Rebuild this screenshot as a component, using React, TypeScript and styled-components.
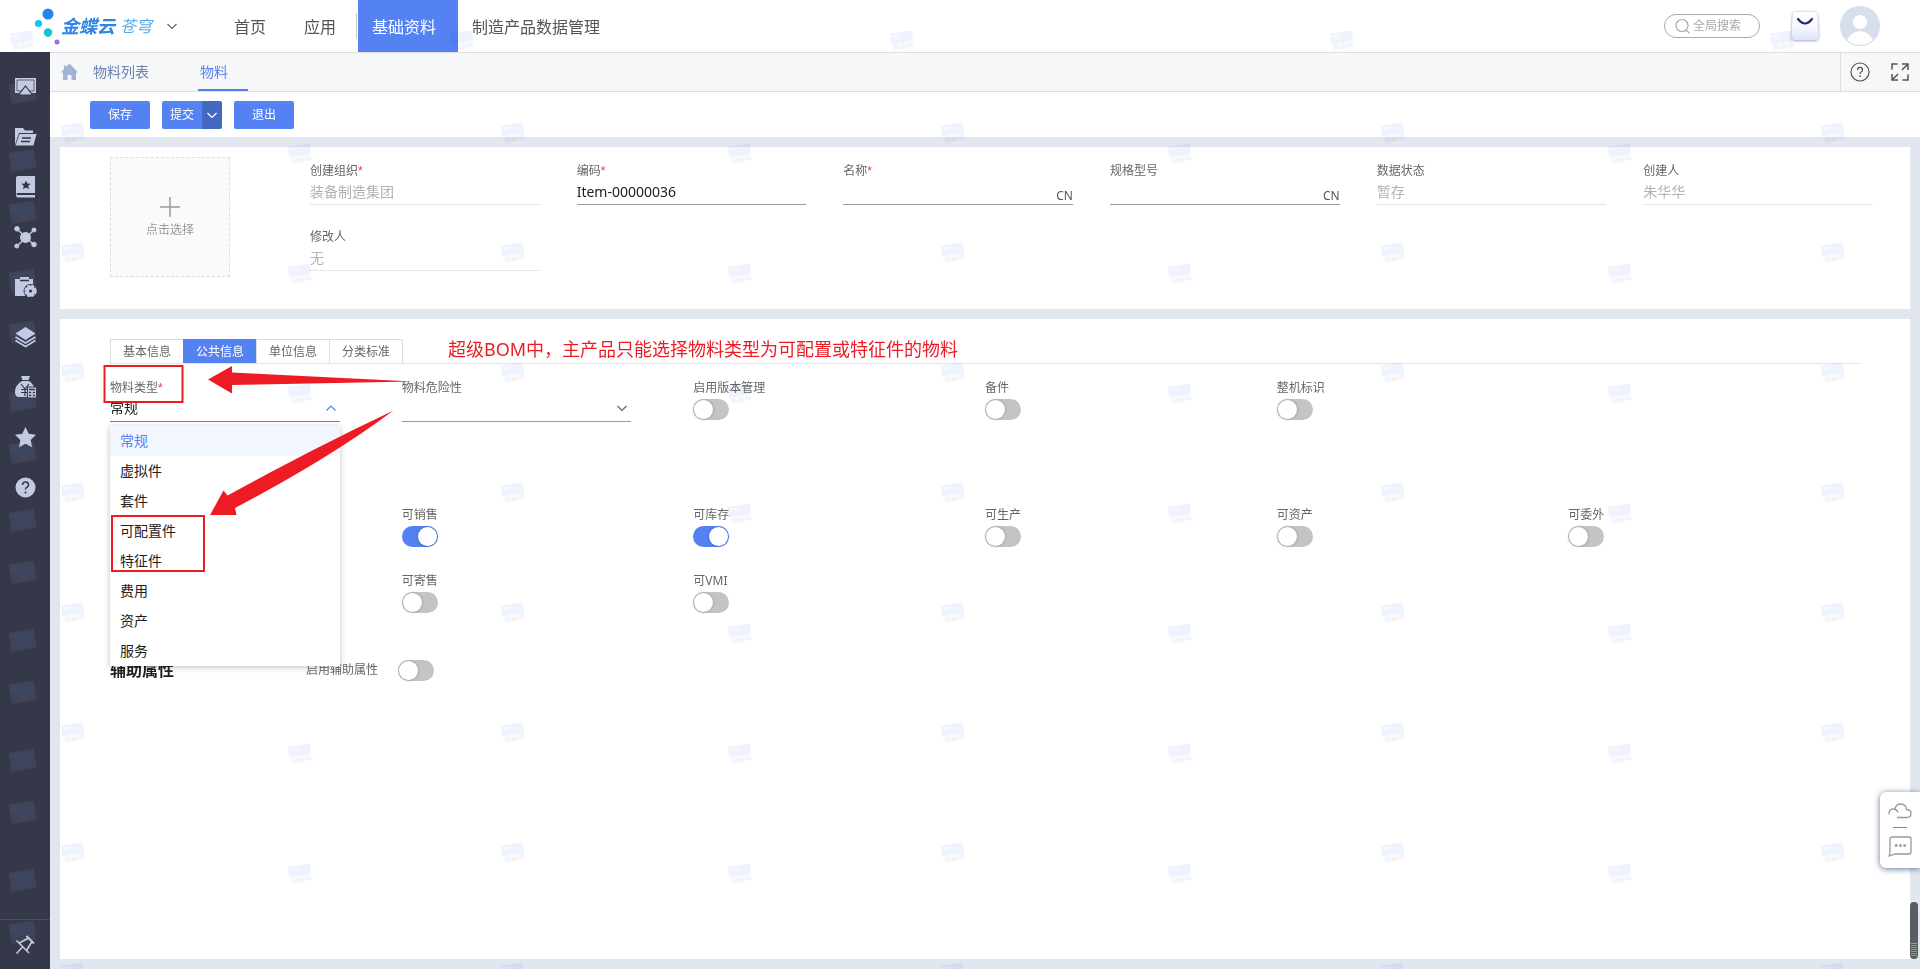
import React from 'react';
import styled, { createGlobalStyle, css } from 'styled-components';

const GlobalStyle = createGlobalStyle`
  * { box-sizing: border-box; }
  html, body, #root { height: 100%; }
  body {
    margin: 0;
    background: #e2e6ef;
    color: #212121;
    font-family: "Noto Sans", "Noto Sans CJK SC", sans-serif;
    font-size: 14px;
    line-height: 20px;
    overflow: hidden;
  }
  button, input, select { font: inherit; color: inherit; margin: 0; padding: 0; border: 0; background: none; outline: 0; }
  button { cursor: pointer; }
  a { color: inherit; text-decoration: none; }
  svg { display: block; }
`;

const Page = styled.div`
  position: relative;
  min-height: 100vh;
  display: flex;
  flex-direction: column;
`;

/* ---------- header ---------- */
const Header = styled.header`
  height: 52px;
  display: flex;
  align-items: center;
  background: #fff;
  flex-shrink: 0;
`;
const Brand = styled.a`
  display: flex;
  align-items: center;
  width: 180px;
  margin-right: 40px;
  padding-left: 34px;
`;
const BrandName = styled.span`
  font-size: 18px;
  line-height: 24px;
  font-weight: 700;
  font-style: italic;
  color: #2b84e8;
  margin-left: 1px;
  white-space: nowrap;
`;
const BrandSub = styled.span`
  font-size: 16px;
  line-height: 24px;
  font-style: italic;
  color: #5aa7f0;
  margin: 0 15px 0 5px;
  white-space: nowrap;
`;
const Nav = styled.nav`
  display: flex;
  align-items: center;
  align-self: stretch;
  flex: 1;
`;
const NavLink = styled.a<{ $active?: boolean }>`
  display: flex;
  align-items: center;
  align-self: stretch;
  padding: 2px 14px 0 14px;
  margin-right: 10px;
  font-size: 16px;
  color: #555;
  ${p => p.$active && css`
    background: #5582f3;
    color: #fff;
    margin-right: 0;
    padding-right: 22px;
  `}
`;
const NavRule = styled.span`
  width: 1px;
  height: 26px;
  margin: 0 1px 0 -4px;
  background: #ccc;
`;
const Search = styled.label`
  display: flex;
  align-items: center;
  gap: 3px;
  width: 96px;
  height: 24px;
  padding: 0 10px;
  border: 1px solid #aaa;
  border-radius: 12px;
  margin-right: 29px;
`;
const SearchInput = styled.input`
  width: 54px;
  font-size: 12px;
  &::placeholder { color: #aaa; opacity: 1; }
`;
const IconButton = styled.button<{ $gap?: number }>`
  display: block;
  margin-right: ${p => p.$gap ?? 0}px;
`;

/* ---------- frame ---------- */
const Body = styled.div`
  flex: 1;
  display: flex;
  min-height: 0;
`;
const Sidebar = styled.aside`
  width: 50px;
  background: #353849;
  display: flex;
  flex-direction: column;
  justify-content: space-between;
  flex-shrink: 0;
`;
const SideList = styled.div`
  position: relative;
  display: flex;
  flex-direction: column;
  padding-top: 10px;
`;
const SideButton = styled.button`
  position: relative;
  height: 50px;
  display: flex;
  align-items: center;
  justify-content: center;
`;
const SideFoot = styled(SideButton)`
  border-top: 1px solid #4b4e60;
`;
const Main = styled.main`
  flex: 1;
  min-width: 0;
  display: flex;
  flex-direction: column;
`;
const TabBar = styled.div`
  height: 40px;
  display: flex;
  align-items: stretch;
  background: #f5f7f9;
  border-top: 1px solid #dedede;
  border-bottom: 1px solid #dedede;
`;
const HomeLink = styled.a`
  display: flex;
  align-items: center;
  padding: 0 14px 0 10px;
`;
const PageTab = styled.a<{ $active?: boolean }>`
  display: flex;
  align-items: center;
  padding-top: 2px;
  width: ${p => (p.$active ? 50 : 105)}px;
  padding-left: ${p => (p.$active ? 2 : 0)}px;
  color: ${p => (p.$active ? '#5582f3' : '#6b82ae')};
  border-bottom: 2px solid ${p => (p.$active ? '#5582f3' : 'transparent')};
`;
const TabTools = styled.div`
  margin-left: auto;
  display: flex;
  align-items: center;
  gap: 20px;
  padding: 0 10px 0 9px;
  border-left: 1px solid #dedede;
`;
const Toolbar = styled.div`
  height: 45px;
  display: flex;
  align-items: center;
  gap: 12px;
  padding-left: 40px;
  background: #fff;
`;
const Action = styled.button`
  width: 60px;
  height: 28px;
  padding-top: 1px;
  border-radius: 2px;
  background: #5582f3;
  color: #fff;
  font-size: 12px;
`;
const Split = styled.div`
  display: flex;
`;
const SplitMain = styled(Action)`
  width: 40px;
  border-radius: 2px 0 0 2px;
`;
const SplitMore = styled(Action)`
  width: 20px;
  border-radius: 0 2px 2px 0;
  background: #4468c2;
  display: flex;
  align-items: center;
  justify-content: center;
`;
const Content = styled.div`
  flex: 1;
  display: flex;
  flex-direction: column;
  gap: 10px;
  padding: 10px;
`;

/* ---------- cards and fields ---------- */
const SummaryCard = styled.section`
  display: flex;
  gap: 80px;
  min-height: 162px;
  padding: 10px 0 0 50px;
  background: #fff;
`;
const Upload = styled.button`
  width: 120px;
  height: 120px;
  flex-shrink: 0;
  display: flex;
  flex-direction: column;
  align-items: center;
  justify-content: center;
  gap: 4px;
  padding-top: 2px;
  border: 1px dashed #ddd;
  background: #fafafa;
  color: #999;
  font-size: 12px;
  line-height: 18px;
`;
const SummaryGrid = styled.div`
  flex: 1;
  display: grid;
  grid-template-columns: repeat(6, 1fr);
  grid-auto-rows: 66px;
  padding-top: 5px;
`;
const Field = styled.div<{ $gap: number }>`
  display: flex;
  flex-direction: column;
  align-items: stretch;
  padding-right: ${p => p.$gap}px;
`;
const FieldLabel = styled.label`
  font-size: 12px;
  line-height: 18px;
  color: #666;
  white-space: nowrap;
`;
const Star = styled.span`
  font-family: "Liberation Sans", sans-serif;
  color: #f33;
`;
const Line = styled.div<{ $muted?: boolean; $focus?: boolean }>`
  position: relative;
  display: flex;
  align-items: flex-start;
  height: 25px;
  color: ${p => (p.$muted ? '#b2b2b2' : '#212121')};
  border-bottom: 1px solid ${p => (p.$muted ? '#e5e5e5' : p.$focus ? '#5582f3' : '#999')};
`;
const TextInput = styled.input`
  flex: 1;
  min-width: 0;
  height: 22px;
`;
const Lang = styled.button`
  align-self: flex-end;
  font-size: 12px;
  line-height: 16px;
  color: #555;
`;
const Picker = styled.select`
  appearance: none;
  flex: 1;
  height: 22px;
`;
const Chevron = styled.span`
  position: absolute;
  right: 4px;
  top: 6px;
  pointer-events: none;
`;
const Toggle = styled.input.attrs({ type: 'checkbox' })`
  appearance: none;
  display: flex;
  width: 36px;
  height: 21px;
  padding: 1px;
  border-radius: 11px;
  background: #c4c4c4;
  cursor: pointer;
  &::before {
    content: '';
    width: 19px;
    height: 19px;
    border-radius: 50%;
    background: #fff;
    box-shadow: 0 0 3px rgba(0, 0, 0, 0.3);
  }
  &:checked { background: #5582f3; justify-content: flex-end; }
`;
const ToggleSlot = styled.div`
  padding-top: 2px;
`;

const DetailCard = styled.section`
  position: relative;
  flex: 1;
  padding: 20px 50px 0;
  background: #fff;
`;
const TabStrip = styled.div`
  display: flex;
  align-items: flex-start;
  border-bottom: 1px solid #e5e5e5;
`;
const TabGroup = styled.div`
  display: flex;
`;
const Tab = styled.button<{ $active?: boolean }>`
  width: 74px;
  height: 24px;
  font-size: 12px;
  color: ${p => (p.$active ? '#fff' : '#666')};
  background: ${p => (p.$active ? '#5582f3' : '#fff')};
  border: 1px solid ${p => (p.$active ? '#5582f3' : '#dcdcdc')};
  border-bottom: 0;
  & + & { margin-left: -1px; }
`;
const Note = styled.p`
  margin: 0 0 0 45px;
  font-size: 18px;
  line-height: 20px;
  color: #ed1c24;
  white-space: nowrap;
`;
const DetailGrid = styled.div<{ $offset?: boolean }>`
  display: grid;
  grid-template-columns: repeat(6, 1fr);
  grid-auto-rows: 66px;
  padding-top: ${p => (p.$offset ? 61 : 15)}px;
  ${p => p.$offset && css`
    & > :nth-child(1), & > :nth-child(6) { grid-column-start: 2; }
  `}
`;
const AuxRow = styled.div`
  display: grid;
  grid-template-columns: 196px 92px auto;
  align-items: center;
  height: 24px;
  margin-top: 20px;
`;
const AuxTitle = styled.h2`
  margin: 0;
  font-size: 16px;
  line-height: 22px;
  font-weight: 700;
`;
const Options = styled.ul`
  position: absolute;
  z-index: 3;
  top: 29px;
  left: 0;
  right: 0;
  margin: 0;
  padding: 0;
  list-style: none;
  background: #fff;
  color: #212121;
  box-shadow: 0 1px 6px rgba(0, 0, 0, 0.25);
`;
const Option = styled.li<{ $active?: boolean }>`
  height: 30px;
  line-height: 30px;
  padding-left: 10px;
  color: ${p => (p.$active ? '#5582f3' : '#212121')};
  background: ${p => (p.$active ? '#f2f6ff' : '#fff')};
`;

/* ---------- layers over the page ---------- */
const Markup = styled.svg`
  position: absolute;
  z-index: 4;
  left: 0;
  top: 0;
  pointer-events: none;
`;
const Watermark = styled.svg<{ $top: number; $left: number }>`
  position: absolute;
  z-index: 2;
  top: ${p => p.$top}px;
  left: ${p => p.$left}px;
  pointer-events: none;
  mix-blend-mode: multiply;
`;
const SideMarks = styled.svg`
  position: absolute;
  top: 52px;
  left: 0;
  pointer-events: none;
`;
const Dock = styled.div`
  position: absolute;
  z-index: 5;
  right: 0;
  bottom: 101px;
  width: 40px;
  height: 76px;
  display: flex;
  flex-direction: column;
  align-items: center;
  justify-content: space-between;
  padding: 11px 0 11px;
  border-radius: 6px 0 0 6px;
  background: #fff;
  box-shadow: 0 1px 6px #5f759f;
`;
const DockRule = styled.span`
  width: 14px;
  height: 1px;
  background: #888;
`;
const Meter = styled.div`
  position: absolute;
  z-index: 5;
  right: 2px;
  bottom: 10px;
  width: 8px;
  height: 57px;
  border-radius: 4px;
  background: #595c60;
  overflow: hidden;
  &::after {
    content: '';
    position: absolute;
    left: 1px;
    right: 1px;
    bottom: 2px;
    height: 14px;
    background: repeating-linear-gradient(#3bd765 0 1px, #4a5a50 1px 2px);
  }
`;

/* ---------- drawings ---------- */
const IC = '#c3cbe2';
const DARK = '#353849';

const LogoMark = () => (
  <svg width="26" height="38" viewBox="0 0 26 38">
    <ellipse cx="14" cy="7" rx="5.500" ry="5.500" fill="#2386ee" />
    <circle cx="4.500" cy="16.500" r="3.600" fill="#0cc8f5" />
    <circle cx="14" cy="25.500" r="4.200" fill="#10c8cc" />
    <circle cx="23" cy="35" r="2.500" fill="#a06cf0" />
  </svg>
);
const ChevronIcon = ({ up, color = '#666' }: { up?: boolean; color?: string }) => (
  <svg width="10" height="10" viewBox="0 0 10 10" fill="none" stroke={color} strokeWidth="1.2">
    <path d={up ? 'M.5 7.500 5 3l4.500 4.500' : 'M.5 3 5 7.500 9.500 3'} />
  </svg>
);
const SearchIcon = () => (
  <svg width="15" height="16" viewBox="0 0 15 16" fill="none" stroke="#aaa" strokeWidth="1.200">
    <circle cx="7" cy="7.500" r="6" />
    <path d="m11 12 3.500 3.200" />
  </svg>
);
const BagIcon = () => (
  <svg width="32" height="34" viewBox="0 0 32 34">
    <defs>
      <linearGradient id="bag" x1="0" y1="0" x2="0" y2="1">
        <stop offset="0" stopColor="#fff" />
        <stop offset=".5" stopColor="#f8f9ff" />
        <stop offset="1" stopColor="#dde3fb" />
      </linearGradient>
      <filter id="bagShadow" x="-20%" y="-20%" width="140%" height="140%">
        <feDropShadow dx="0" dy="0.500" stdDeviation="1.500" floodColor="#5f668f" floodOpacity=".75" />
      </filter>
    </defs>
    <path d="M7 3h18q3 0 3.200 3l1.300 21q0 4-4 4H6.500q-4 0-4-4L3.800 6Q4 3 7 3z" fill="url(#bag)" filter="url(#bagShadow)" />
    <path d="M9 10q7 9 14 0" fill="none" stroke="#2d2d6d" strokeWidth="2.200" strokeLinecap="round" />
  </svg>
);
const AvatarIcon = () => (
  <svg width="40" height="40" viewBox="0 0 40 40">
    <clipPath id="face"><circle cx="20" cy="20" r="19" /></clipPath>
    <circle cx="20" cy="20" r="20" fill="#d7deec" />
    <g clipPath="url(#face)" fill="#fff">
      <circle cx="20" cy="16" r="7" />
      <path d="M6 39q2-13 14-14 12 1 14 14z" />
    </g>
  </svg>
);
const HomeIcon = () => (
  <svg width="19" height="18" viewBox="0 0 19 18" fill="#a3b1d3">
    <path d="M9.500.5 18 9.500h-2V17h-4.500v-5h-4v5H3V9.500H1L4 6V2.500h2V4z" />
  </svg>
);
const HelpIcon = () => (
  <svg width="20" height="20" viewBox="0 0 20 20" fill="none" stroke="#555" strokeWidth="1.200">
    <circle cx="10" cy="10" r="9" />
    <path d="M7.500 8q0-2.700 2.500-2.700T12.500 8q0 1.300-1.300 2T10 12" />
    <path d="M10 13.500V15" strokeWidth="1.500" />
  </svg>
);
const ExpandIcon = () => (
  <svg width="20" height="20" viewBox="0 0 20 20" fill="none" stroke="#555" strokeWidth="1.500">
    <path d="M2 7.500V2h5.500M12 2h6v6M18 2l-6 6M18 12.500V18h-5.500M8 18H2v-6M2 18l6-6" />
  </svg>
);
const sideIcons: React.ReactNode[] = [
  <g>
    <path d="M1 2h21v15H1z" fill={IC} />
    <path d="M3 4h17v11H3z" fill="none" stroke={DARK} strokeWidth=".7" />
    <path d="m11.500 10 7 9h-14z" fill={IC} stroke={DARK} strokeWidth="1.200" />
  </g>,
  <g>
    <path d="M1 19V2h8l2 2.500h8V7H5z" fill={IC} />
    <path d="M5.500 8H22.500l-3 11.500H1.500z" fill={IC} />
    <path d="M8 12h9M7 15.500h9" stroke={DARK} strokeWidth="1.300" />
  </g>,
  <g>
    <path d="M4 0h17v17H4q-1.500 0-1.500 1T4 19h17v2.500H4Q2 21.500 2 19V2q0-2 2-2z" fill={IC} />
    <path d="m12 4.500 1.400 3 3.300.3-2.500 2.200.8 3.300-3-1.700-3 1.700.8-3.300L7.300 7.800l3.300-.3z" fill={DARK} />
  </g>,
  <g fill={IC} stroke={IC}>
    <path d="M3 3l17 16M20 4 3 20" strokeWidth="1.400" />
    <circle cx="11.500" cy="11.500" r="5" />
    <circle cx="3" cy="2.800" r="2.300" /><circle cx="20" cy="4" r="2" />
    <circle cx="2.800" cy="20" r="2" /><circle cx="20" cy="18.500" r="2.300" />
  </g>,
  <g>
    <path d="M1 3h5V1h9v2h4v17H1z" fill={IC} />
    <path d="M6 4.500h9" stroke={DARK} strokeWidth="1.500" />
    <circle cx="16.500" cy="15" r="7" fill={DARK} />
    <circle cx="16.500" cy="15" r="5" fill={IC} stroke={IC} strokeWidth="2.500" strokeDasharray="3 .93" />
    <circle cx="16.500" cy="15" r="1.600" fill={DARK} />
  </g>,
  <g>
    <path d="m11.500 1 10 6.500-10 6.500-10-6.500z" fill={IC} />
    <path d="m1.500 11 10 6 10-6M1.500 14.500l10 6 10-6" fill="none" stroke={IC} strokeWidth="1.600" />
  </g>,
  <g>
    <path d="M7 0h9l-1.500 4H8.500zM8 5h7q6 4 6 11 0 5-4 5H5q-4 0-4-5Q1 9 8 5z" fill={IC} />
    <path d="m7 8 4 5 4-5M11 13v7M7 13.500h8M7 16.500h8" fill="none" stroke={DARK} strokeWidth="1.200" />
    <path d="M13.500 11h9v11h-9z" fill={IC} stroke={DARK} />
    <path d="M15 13.500h6M15 16.500h2.200M18.800 16.500H21M15 19.500h2.200M18.800 19.500H21" stroke={DARK} strokeWidth="1.500" />
  </g>,
  <path d="m11.500 1 3.200 6.800 7.300 1-5.300 5.200 1.300 7.300-6.500-3.500L5 21.300 6.300 14 1 8.800l7.300-1z" fill={IC} />,
  <g>
    <circle cx="11.500" cy="11.500" r="10" fill={IC} />
    <path d="M8.500 9q0-3 3-3t3 3q0 1.500-1.500 2.200-1.500.8-1.500 2.300" fill="none" stroke={DARK} strokeWidth="1.500" />
    <circle cx="11.500" cy="16.500" r="1.100" fill={DARK} />
  </g>,
];
const PinIcon = () => (
  <svg width="20" height="20" viewBox="0 0 20 20" fill="none" stroke={IC} strokeWidth="1.600">
    <path d="M11.500 1 19 8.500" strokeWidth="2" />
    <path d="M1.500 5.500 14 18M4.500 8 13.500 3M11.500 15.500 17 6.500M7.500 12l-6 6.500" />
  </svg>
);
const CloudIcon = () => (
  <svg width="24" height="16" viewBox="0 0 24 16" fill="none" stroke="#999" strokeWidth="1.300">
    <path d="M1 11.500Q.5 6 5 6q4 0 5 3.500M7 6Q8 1 12.500 1 18 1 18.500 6.500 23 6.500 23 10.500T18.500 14.500H9" />
  </svg>
);
const ChatIcon = () => (
  <svg width="24" height="21" viewBox="0 0 24 21" fill="none" stroke="#999" strokeWidth="1.300">
    <path d="M4 1h17q2 0 2 2v13q0 2-2 2H7l-6 2q1-2 1-5V3q0-2 2-2z" />
    <path d="M7 9.500h2.500M11.200 9.500h2.500M15.400 9.500h2.500" strokeWidth="2.500" />
  </svg>
);

const CardStamp = ({ dark }: { dark?: boolean }) =>
  dark ? (
    <g transform="rotate(-9 13 11)">
      <path d="M1 2h25v19H1z" fill="#414457" />
      <path d="M3 4h21v10H3z" fill="#3c4560" />
      <path d="M5 6.500h7" stroke="#444e69" />
      <path d="M3 15h21v5H3z" fill="#3d435a" />
      <path d="M11 16h5v3h-5z" fill="#4a4549" />
    </g>
  ) : (
    <g transform="rotate(-9 12 10)" opacity=".75">
      <path d="M1 1h22v11H1z" fill="#e8effd" />
      <path d="M3 4h7" stroke="#f8fbff" strokeWidth="1.500" />
      <path d="M2 12h21v6H2z" fill="#f6f9fe" />
      <path d="M3 14h5v4H3zM17 13h5v4h-5z" fill="#eaf1fd" />
      <path d="M10 14h5v4h-5z" fill="#fdeeda" />
    </g>
  );

const Watermarks = () => (
  <>
    <Watermark $top={0} $left={0} width="100%" height="52">
      <pattern id="markTop" x="10" y="31" width="440" height="120" patternUnits="userSpaceOnUse"><CardStamp /></pattern>
      <rect y="30" width="100%" height="22" fill="url(#markTop)" />
    </Watermark>
    <Watermark $top={92} $left={50} width="calc(100% - 50px)" height="calc(100% - 92px)">
      <pattern id="markA" x="11" y="31" width="440" height="120" patternUnits="userSpaceOnUse"><CardStamp /></pattern>
      <pattern id="markB" x="238" y="52" width="440" height="120" patternUnits="userSpaceOnUse"><CardStamp /></pattern>
      <rect width="100%" height="100%" fill="url(#markA)" />
      <rect y="52" width="100%" height="100%" fill="url(#markB)" />
    </Watermark>
  </>
);

/* ---------- data ---------- */
const options = ['常规', '虚拟件', '套件', '可配置件', '特征件', '费用', '资产', '服务'];
const summary = [
  { id: 'org', label: '创建组织', value: '装备制造集团', required: true, muted: true },
  { id: 'code', label: '编码', value: 'Item-00000036', required: true },
  { id: 'name', label: '名称', value: '', required: true, lang: true },
  { id: 'spec', label: '规格型号', value: '', lang: true },
  { id: 'state', label: '数据状态', value: '暂存', muted: true },
  { id: 'creator', label: '创建人', value: '朱华华', muted: true },
  { id: 'editor', label: '修改人', value: '无', muted: true },
];
const flags = [
  { id: 'sale', label: '可销售', on: true },
  { id: 'stock', label: '可库存', on: true },
  { id: 'make', label: '可生产' },
  { id: 'asset', label: '可资产' },
  { id: 'outsource', label: '可委外' },
  { id: 'consign', label: '可寄售' },
  { id: 'vmi', label: '可VMI' },
];

const ToggleField = ({ id, label, on }: { id: string; label: string; on?: boolean }) => (
  <Field $gap={62}>
    <FieldLabel htmlFor={id}>{label}</FieldLabel>
    <ToggleSlot><Toggle id={id} defaultChecked={on} /></ToggleSlot>
  </Field>
);

export default function App() {
  return (
    <Page>
      <GlobalStyle />
      <Header>
        <Brand href="#">
          <LogoMark />
          <BrandName>金蝶云</BrandName>
          <BrandSub>苍穹</BrandSub>
          <ChevronIcon />
        </Brand>
        <Nav>
          <NavLink href="#">首页</NavLink>
          <NavLink href="#">应用</NavLink>
          <NavRule />
          <NavLink href="#" $active>基础资料</NavLink>
          <NavLink href="#">制造产品数据管理</NavLink>
        </Nav>
        <Search>
          <SearchIcon />
          <SearchInput placeholder="全局搜索" aria-label="全局搜索" />
        </Search>
        <IconButton $gap={19}><BagIcon /></IconButton>
        <IconButton $gap={40}><AvatarIcon /></IconButton>
      </Header>
      <Body>
        <Sidebar>
          <SideMarks width="50" height="calc(100% - 52px)">
            <pattern id="sideA" x="9" y="97" width="440" height="120" patternUnits="userSpaceOnUse"><CardStamp dark /></pattern>
            <pattern id="sideB" x="9" y="29" width="440" height="120" patternUnits="userSpaceOnUse"><CardStamp dark /></pattern>
            <rect y="90" width="100%" height="100%" fill="url(#sideA)" />
            <rect width="100%" height="100%" fill="url(#sideB)" />
          </SideMarks>
          <SideList>
            {sideIcons.map((icon, i) => (
              <SideButton key={i}>
                <svg width="23" height="23" viewBox="0 0 23 23">{icon}</svg>
              </SideButton>
            ))}
          </SideList>
          <SideFoot><PinIcon /></SideFoot>
        </Sidebar>
        <Main>
          <TabBar>
            <HomeLink href="#"><HomeIcon /></HomeLink>
            <PageTab href="#">物料列表</PageTab>
            <PageTab href="#" $active>物料</PageTab>
            <TabTools>
              <IconButton><HelpIcon /></IconButton>
              <IconButton><ExpandIcon /></IconButton>
            </TabTools>
          </TabBar>
          <Toolbar>
            <Action>保存</Action>
            <Split>
              <SplitMain>提交</SplitMain>
              <SplitMore><ChevronIcon color="#fff" /></SplitMore>
            </Split>
            <Action>退出</Action>
          </Toolbar>
          <Content>
            <SummaryCard>
              <Upload>
                <svg width="20" height="20" viewBox="0 0 20 20" stroke="#999" strokeWidth="1.500"><path d="M10 0v20M0 10h20" /></svg>
                点击选择
              </Upload>
              <SummaryGrid>
                {summary.map(f => (
                  <Field key={f.id} $gap={37}>
                    <FieldLabel htmlFor={f.id}>{f.label}{f.required && <Star>*</Star>}</FieldLabel>
                    <Line $muted={f.muted}>
                      <TextInput id={f.id} defaultValue={f.value} readOnly={f.muted} />
                      {f.lang && <Lang>CN</Lang>}
                    </Line>
                  </Field>
                ))}
              </SummaryGrid>
            </SummaryCard>
            <DetailCard>
              <TabStrip>
                <TabGroup>
                  <Tab>基本信息</Tab>
                  <Tab $active>公共信息</Tab>
                  <Tab>单位信息</Tab>
                  <Tab>分类标准</Tab>
                </TabGroup>
                <Note>超级BOM中，主产品只能选择物料类型为可配置或特征件的物料</Note>
              </TabStrip>
              <DetailGrid>
                <Field $gap={62}>
                  <FieldLabel htmlFor="kind">物料类型<Star>*</Star></FieldLabel>
                  <Line $focus>
                    <Picker id="kind" defaultValue="常规">
                      {options.map(o => <option key={o}>{o}</option>)}
                    </Picker>
                    <Chevron><ChevronIcon up color="#5582f3" /></Chevron>
                    <Options>
                      {options.map((o, i) => <Option key={o} $active={i === 0}>{o}</Option>)}
                    </Options>
                  </Line>
                </Field>
                <Field $gap={62}>
                  <FieldLabel htmlFor="danger">物料危险性</FieldLabel>
                  <Line>
                    <Picker id="danger" />
                    <Chevron><ChevronIcon /></Chevron>
                  </Line>
                </Field>
                <ToggleField id="version" label="启用版本管理" />
                <ToggleField id="spare" label="备件" />
                <ToggleField id="whole" label="整机标识" />
              </DetailGrid>
              <DetailGrid $offset>
                {flags.map(f => <ToggleField key={f.id} {...f} />)}
              </DetailGrid>
              <AuxRow>
                <AuxTitle>辅助属性</AuxTitle>
                <FieldLabel htmlFor="aux">启用辅助属性</FieldLabel>
                <Toggle id="aux" />
              </AuxRow>
              <Markup width="480" height="260" viewBox="0 0 480 260">
                <g fill="#ed1c24">
                  <path d="M148 60.500 172 47v6.500L353 62.500 172 66v8.500z" />
                  <path d="M150 196 163.500 171.500l4 5Q254 129 333.500 91.500 270 139 175 189l1.500 7z" />
                </g>
                <g fill="none" stroke="#ed1c24" strokeWidth="2">
                  <path d="M44.500 47h78v36h-78zM52 197h92v55H52z" />
                </g>
              </Markup>
            </DetailCard>
          </Content>
        </Main>
      </Body>
      <Watermarks />
      <Dock>
        <IconButton><CloudIcon /></IconButton>
        <DockRule />
        <IconButton><ChatIcon /></IconButton>
      </Dock>
      <Meter />
    </Page>
  );
}
